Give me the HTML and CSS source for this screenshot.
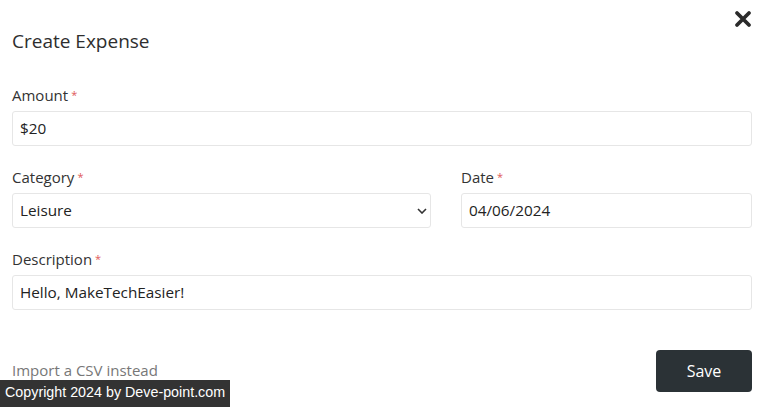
FILE: index.html
```html
<!DOCTYPE html>
<html>
<head>
<meta charset="utf-8">
<link rel="stylesheet" href="styles.css">
</head>
<body>
<div class="modal">
  <button class="close" aria-label="Close">
    <svg width="18" height="18" viewBox="0 0 18 18"><path d="M3 3L15 15M15 3L3 15" stroke="#2b2b2b" stroke-width="3.8" stroke-linecap="round"/></svg>
  </button>
  <h1 class="title">Create Expense</h1>
  <form class="form">
    <div class="field">
      <label class="label">Amount<span class="req">*</span></label>
      <div class="input">$20</div>
    </div>
    <div class="row">
      <div class="field">
        <label class="label">Category<span class="req">*</span></label>
        <div class="input select">Leisure
          <svg class="chev" width="10" height="6" viewBox="0 0 10 6"><path d="M1 1L5 5L9 1" fill="none" stroke="#333" stroke-width="1.6"/></svg>
        </div>
      </div>
      <div class="field">
        <label class="label">Date<span class="req">*</span></label>
        <div class="input">04/06/2024</div>
      </div>
    </div>
    <div class="field">
      <label class="label">Description<span class="req">*</span></label>
      <div class="input">Hello, MakeTechEasier!</div>
    </div>
    <div class="footer">
      <a class="import">Import a CSV instead</a>
      <button class="save" type="button">Save</button>
    </div>
  </form>
</div>
<div class="copyright">Copyright 2024 by Deve-point.com</div>
</body>
</html>
```
FILE: styles.css
```css
* { box-sizing: border-box; }
html, body { margin: 0; padding: 0; background: #fff; }
body {
  font-family: "Open Sans", "Noto Sans", sans-serif;
  color: #333;
  width: 768px;
  height: 407px;
  overflow: hidden;
  position: relative;
}
.modal { padding: 0 16px 0 12px; position: relative; }
.close {
  position: absolute; right: 16px; top: 10px;
  border: 0; background: none; padding: 0; width: 18px; height: 18px;
}
.close svg { display: block; }
.title {
  margin: 0; padding-top: 28px; height: 86px;
  font-size: 19px; font-weight: 500; line-height: 26px; color: #2e2e2e;
}
.field { display: flex; flex-direction: column; }
.label {
  font-size: 15px; line-height: 18px; height: 25px; color: #333;
}
.req { color: #e05a5a; font-size: 11px; margin-left: 3px; vertical-align: top; position: relative; top: 0; }
.input {
  height: 35px; border: 1px solid #e6e6e6; border-radius: 3px;
  padding: 0 7px; font-size: 15.3px; line-height: 33px; color: #222;
  margin-bottom: 22px; position: relative;
}
.select .chev { position: absolute; right: 3px; top: 14px; }
.row { display: grid; grid-template-columns: 419px 1fr; column-gap: 30px; }
.footer {
  display: flex; justify-content: space-between; align-items: flex-start;
  padding-top: 18px;
}
.import { font-size: 15px; color: #777; margin-top: 10px; line-height: 20px; }
.save {
  width: 96px; height: 42px; border: 0; border-radius: 4px;
  background: #2b3236; color: #fff; font-family: inherit; font-size: 16px; font-weight: 500;
}
.copyright {
  position: absolute; left: 0; top: 380px; width: 230px; height: 27px;
  background: #333; color: #fff;
  font-family: "Liberation Sans", Arial, sans-serif; font-size: 14.3px;
  line-height: 25px; padding-left: 5px;
}
```
